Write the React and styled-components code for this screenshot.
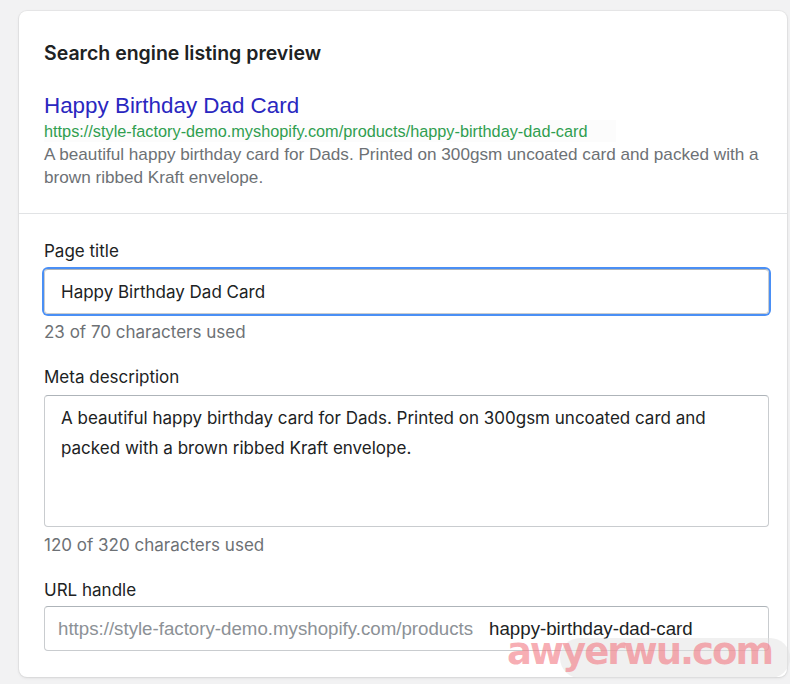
import React from 'react'
import styled, { createGlobalStyle } from 'styled-components'

const GlobalStyle = createGlobalStyle`
  html, body {
    margin: 0;
    background: #f2f2f3;
  }
  body {
    font-family: Inter, "Noto Sans", sans-serif;
    color: #202223;
  }
`

const preview = {
  title: 'Happy Birthday Dad Card',
  url: 'https://style-factory-demo.myshopify.com/products/happy-birthday-dad-card',
  description:
    'A beautiful happy birthday card for Dads. Printed on 300gsm uncoated card and packed with a brown ribbed Kraft envelope.',
}

function App() {
  return (
    <>
      <GlobalStyle />
      <Page>
        <Card>
          <Section>
            <Heading>Search engine listing preview</Heading>
            <ListingTitle>{preview.title}</ListingTitle>
            <ListingUrl>{preview.url}</ListingUrl>
            <ListingDescription>{preview.description}</ListingDescription>
          </Section>
          <Section bottom>
            <Field>
              <Label>Page title</Label>
              <TextInput focused>{preview.title}</TextInput>
              <HelpText>23 of 70 characters used</HelpText>
            </Field>
            <Field>
              <Label>Meta description</Label>
              <TextArea>{preview.description}</TextArea>
              <HelpText>120 of 320 characters used</HelpText>
            </Field>
            <Field>
              <Label tight>URL handle</Label>
              <TextInput>
                <Prefix>https://style-factory-demo.myshopify.com/products</Prefix>
                <Handle>happy-birthday-dad-card</Handle>
              </TextInput>
            </Field>
          </Section>
        </Card>
        <Watermark>
          <WatermarkText>awyerwu.com</WatermarkText>
        </Watermark>
      </Page>
    </>
  )
}

export default App

const Page = styled.div`
  position: relative;
  width: 790px;
  height: 684px;
  padding: 11px 0 0 19px;
  box-sizing: border-box;
  overflow: hidden;
`

const Card = styled.div`
  width: 768px;
  background: #ffffff;
  border-radius: 8px;
  box-shadow: 0 0 0 1px rgba(63, 63, 68, 0.05), 0 1px 3px rgba(63, 63, 68, 0.12);
`

const Section = styled.div`
  padding: ${props => props.bottom ? '26px 18px 26px 25px' : '30px 18px 24px 25px'};
  display: flex;
  flex-direction: column;
  gap: ${props => props.bottom ? '23px' : '0'};
  & + & {
    border-top: 1px solid #e1e3e5;
  }
`

const Heading = styled.h2`
  margin: 0 0 28px;
  font-size: 19.5px;
  line-height: 24px;
  font-weight: 600;
  color: #202223;
`

const ListingTitle = styled.div`
  font-family: "Liberation Sans", Arial, sans-serif;
  font-size: 22.4px;
  line-height: 26px;
  color: #2a27c0;
`

const ListingUrl = styled.div`
  align-self: flex-start;
  font-family: "Liberation Sans", Arial, sans-serif;
  font-size: 16.3px;
  line-height: 22px;
  padding-right: 28px;
  margin-top: 1px;
  color: #2f9e4f;
  background: #fcfcfc;
`

const ListingDescription = styled.p`
  margin: 1px 0 0;
  font-family: "Liberation Sans", Arial, sans-serif;
  font-size: 17.15px;
  line-height: 23px;
  color: #6d7175;
`

const Field = styled.div`
  display: flex;
  flex-direction: column;
`

const Label = styled.label`
  font-size: 17px;
  line-height: 22px;
  color: #202223;
  margin-bottom: ${props => props.tight ? '5px' : '7px'};
`

const TextInput = styled.div`
  height: 45px;
  box-sizing: border-box;
  display: flex;
  align-items: center;
  padding: 0 16px;
  border: 1px solid #c9cccf;
  border-top-color: #aeb4b9;
  border-radius: 4px;
  font-size: 17px;
  color: #202223;
  box-shadow: ${props => props.focused ? '0 0 0 2px #4a8ff5' : 'none'};
`

const TextArea = styled.div`
  height: 132px;
  box-sizing: border-box;
  padding: 7px 16px;
  border: 1px solid #c9cccf;
  border-top-color: #aeb4b9;
  border-radius: 4px;
  font-size: 17px;
  line-height: 30px;
  color: #202223;
`

const HelpText = styled.div`
  margin-top: 7px;
  font-size: 17px;
  line-height: 22px;
  color: #6d7175;
`

const Prefix = styled.span`
  margin-left: -3px;
  font-family: "Liberation Sans", Arial, sans-serif;
  font-size: 18.7px;
  color: #8c9196;
`

const Handle = styled.span`
  margin-left: 16px;
  font-family: "Liberation Sans", Arial, sans-serif;
  font-size: 18.7px;
  color: #202223;
`

const Watermark = styled.div`
  position: absolute;
  right: 0;
  bottom: 6px;
  width: 280px;
  height: 40px;
  display: flex;
  align-items: flex-start;
  justify-content: flex-end;
  padding-right: 18px;
  box-sizing: border-box;
  &::before {
    content: '';
    position: absolute;
    left: 50px;
    right: 0;
    top: 0;
    bottom: 0;
    border-radius: 20px;
    background: rgba(225, 225, 225, 0.5);
  }
`

const WatermarkText = styled.span`
  position: relative;
  margin-top: 7px;
  font-family: "DejaVu Sans", sans-serif;
  font-weight: 700;
  font-size: 37px;
  line-height: 14px;
  letter-spacing: -2px;
  color: rgba(243, 120, 130, 0.6);
`
